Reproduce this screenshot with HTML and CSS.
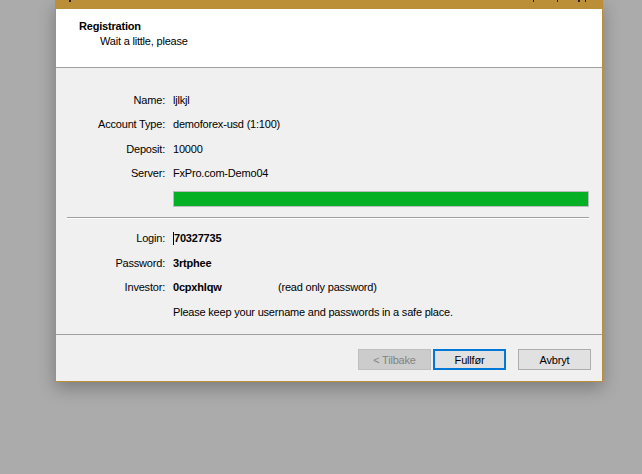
FILE: index.html
```html
<!DOCTYPE html>
<html>
<head>
<meta charset="utf-8">
<link rel="stylesheet" href="styles.css">
</head>
<body>
<div class="window">
  <div class="titlebar">
    <span class="tick t1"></span>
    <span class="tick t2"></span>
    <span class="tick t3"></span>
    <span class="tick t4"></span>
    <span class="tick t5"></span>
  </div>
  <div class="header">
    <div class="h-title">Registration</div>
    <div class="h-sub">Wait a little, please</div>
  </div>
  <div class="content">
    <div class="rows">
      <div class="lbl">Name:</div><div class="val">ljlkjl</div>
      <div class="lbl">Account Type:</div><div class="val">demoforex-usd (1:100)</div>
      <div class="lbl">Deposit:</div><div class="val">10000</div>
      <div class="lbl">Server:</div><div class="val">FxPro.com-Demo04</div>
    </div>
    <div class="progress"><div class="fill"></div></div>
    <div class="sep"></div>
    <div class="rows rows2">
      <div class="lbl">Login:</div><div class="val bold"><span class="caret"></span>70327735</div>
      <div class="lbl">Password:</div><div class="val bold">3rtphee</div>
      <div class="lbl">Investor:</div><div class="val"><span class="bold inv">0cpxhlqw</span><span>(read only password)</span></div>
      <div class="lbl"></div><div class="val">Please keep your username and passwords in a safe place.</div>
    </div>
  </div>
  <div class="footer">
    <button class="btn disabled">&lt; Tilbake</button>
    <button class="btn primary">Fullfør</button>
    <button class="btn cancel">Avbryt</button>
  </div>
</div>
</body>
</html>
```
FILE: styles.css
```css
html, body {
  margin: 0;
  padding: 0;
}
body {
  background: #ababab;
  width: 642px;
  height: 474px;
  overflow: hidden;
  font-family: "Liberation Sans", Arial, sans-serif;
  font-size: 11px;
  letter-spacing: -0.2px;
  color: #000;
}
.window {
  margin-left: 55px;
  width: 546px;
  border: 1px solid #bb8f38;
  border-top: none;
  background: #f0f0f0;
  box-shadow: 0 6px 16px rgba(0, 0, 0, 0.28);
}
.titlebar {
  height: 9px;
  background: #bb8f38;
  position: relative;
}
.tick {
  position: absolute;
  top: 0;
  width: 2px;
  height: 2px;
  background: #2a1a00;
}
.t1 { left: 13px; }
.t2 { left: 477px; width: 1px; }
.t3 { left: 501px; width: 1px; }
.t4 { left: 522px; }
.t5 { left: 529px; width: 1px; }
.header {
  background: #fff;
  height: 59px;
  border-bottom: 1px solid #a0a0a0;
  box-sizing: border-box;
  padding: 10px 0 0 23px;
  line-height: 15px;
}
.h-title {
  font-weight: bold;
}
.h-sub {
  padding-left: 21px;
}
.content {
  padding: 20px 13px 0 11px;
  height: 267px;
  box-sizing: border-box;
  border-bottom: 1px solid #a0a0a0;
}
.rows {
  display: grid;
  grid-template-columns: 98px 1fr;
  column-gap: 8px;
  line-height: 24.3px;
}
.rows2 {
  line-height: 24.5px;
  margin-top: 7px;
}
.lbl {
  text-align: right;
}
.val {
  display: flex;
  align-items: center;
}
.bold {
  font-weight: bold;
}
.inv {
  width: 105px;
}
.caret {
  display: inline-block;
  width: 1px;
  height: 13px;
  background: #000;
}
.progress {
  margin: 6px 0 0 106px;
  height: 16px;
  border: 1px solid #bcbcbc;
  box-sizing: border-box;
  background: #e6e6e6;
}
.fill {
  height: 100%;
  background: #06b025;
}
.sep {
  margin: 10px 0 0 0;
  height: 1px;
  background: #a0a0a0;
  border-bottom: 1px solid #fff;
}
.footer {
  display: flex;
  justify-content: flex-end;
  padding: 14px 11px 11px 0;
}
.btn {
  width: 73px;
  height: 21px;
  box-sizing: border-box;
  font-family: "Liberation Sans", Arial, sans-serif;
  font-size: 11px;
  letter-spacing: -0.2px;
  padding: 0;
  background: #e1e1e1;
  border: 1px solid #adadad;
  color: #000;
}
.disabled {
  background: #cccccc;
  border-color: #bfbfbf;
  color: #838383;
}
.primary {
  margin-left: 2px;
  border: 2px solid #0078d7;
}
.cancel {
  margin-left: 12px;
}
```
